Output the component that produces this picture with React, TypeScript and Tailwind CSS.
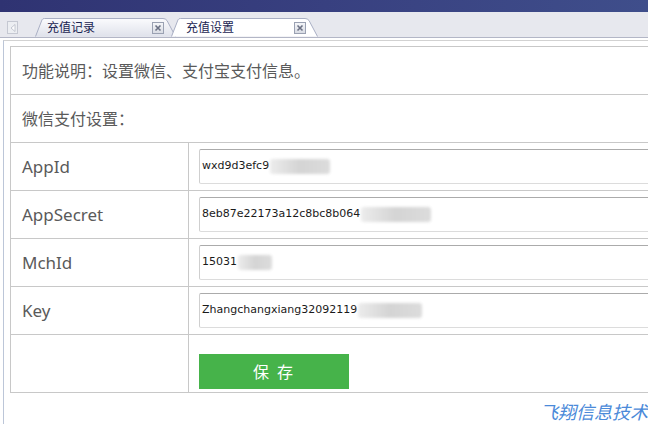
import React from "react";

const CJK = '"Noto Sans", "Noto Sans CJK SC", sans-serif';

const FIELDS = [
  { label: "AppId", value: "wxd9d3efc9", blur: "w-[60px]" },
  { label: "AppSecret", value: "8eb87e22173a12c8bc8b064", blur: "w-[70px]" },
  { label: "MchId", value: "15031", blur: "w-[34px]" },
  { label: "Key", value: "Zhangchangxiang32092119", blur: "w-[64px]" },
];

function CloseBox() {
  return (
    <span className="flex h-[12px] w-[12px] items-center justify-center border border-[#9aa1b2] bg-gradient-to-b from-[#f4f5f8] to-[#d9dce4]">
      <svg width="8" height="8" viewBox="0 0 8 8">
        <path d="M1.5 1.5 L6.5 6.5 M6.5 1.5 L1.5 6.5" stroke="#6b7184" strokeWidth="1.6" />
      </svg>
    </span>
  );
}

function Tab({ title, active, width, className }: { title: string; active?: boolean; width: number; className?: string }) {
  const w = width;
  const d = `M0.5 18.5 L7 1.8 Q7.6 0.5 9.5 0.5 L${w - 13} 0.5 Q${w - 10.5} 0.5 ${w - 9} 2.5 L${w - 0.5} 18.5`;
  return (
    <div className={`relative flex h-[19px] items-center ${className ?? ""}`} style={{ width: w }}>
      <svg className="absolute inset-0" width={w} height={19} viewBox={`0 0 ${w} 19`}>
        <defs>
          <linearGradient id={`g-${title}`} x1="0" y1="0" x2="0" y2="1">
            <stop offset="0" stopColor={active ? "#ffffff" : "#fbfbfd"} />
            <stop offset="1" stopColor={active ? "#ffffff" : "#dfe2eb"} />
          </linearGradient>
        </defs>
        <path d={d} fill={`url(#g-${title})`} stroke="#a9afc4" strokeWidth="1" />
      </svg>
      <span className={`relative text-[12px] leading-none text-[#1b2552] ${active ? "ml-[15px]" : "ml-[12px]"}`}>{title}</span>
      <span className="relative ml-auto mr-[12px]">
        <CloseBox />
      </span>
    </div>
  );
}

export default function App() {
  return (
    <div className="relative h-[424px] w-[648px] overflow-hidden bg-white" style={{ fontFamily: CJK }}>
      <div className="h-[12px] bg-gradient-to-r from-[#2f3372] via-[#384080] to-[#3f4e8b]" />

      <div className="flex h-[26px] items-end border-b border-[#b3b6c6] bg-[#e7e8ee] pl-[7px]">
        <span className="mb-[3px] flex h-[13px] w-[11px] items-center justify-center border border-[#c5c8d2] bg-[#eceef2]">
          <svg width="6" height="8" viewBox="0 0 6 8">
            <path d="M5 0.5 L1 4 L5 7.5 Z" fill="#fdfdfe" stroke="#b7bbc7" strokeWidth="0.8" />
          </svg>
        </span>
        <Tab title="充值记录" width={141} className="ml-[17px]" />
        <Tab title="充值设置" active width={147} className="-ml-[5px]" />
      </div>

      <div className="mt-[2px] ml-[3px] border-t border-l border-t-[#d2d2d2] border-l-[#bcc6d8] pl-[6px] pt-[5px] pb-[8px]">
        <table className="w-[720px] border-collapse text-[#5a5a5a]">
          <tbody>
            <tr className="h-[48px]">
              <td colSpan={2} className="border border-[#c8c8c8] pl-[11px] text-[16px]">
                功能说明：设置微信、支付宝支付信息。
              </td>
            </tr>
            <tr className="h-[48px]">
              <td colSpan={2} className="border border-[#c8c8c8] pl-[11px] text-[16px]">
                微信支付设置：
              </td>
            </tr>
            {FIELDS.map((f) => (
              <tr key={f.label} className="h-[48px]">
                <td className="w-[178px] border border-[#c8c8c8] pl-[11px] text-[17px]">{f.label}</td>
                <td className="border border-[#c8c8c8] pl-[10px]">
                  <div className="flex h-[35px] items-center rounded-[2px] border border-[#cfcfcf] border-t-[#ababab] border-b-[#dcdcdc] pl-[2px] text-[11px] text-[#1a1a1a]" style={{ fontFamily: '"DejaVu Sans", sans-serif' }}>
                    <span>{f.value}</span>
                    <span className={`ml-[1px] h-[15px] ${f.blur} rounded-[3px] bg-gradient-to-r from-[#ececec] via-[#d4d4d4] to-[#dcdcdc] blur-[1.5px]`} />
                  </div>
                </td>
              </tr>
            ))}
            <tr className="h-[58px]">
              <td className="border border-[#c8c8c8]" />
              <td className="border border-[#c8c8c8] pl-[10px] pt-[19px] pb-[2px] align-top">
                <button className="h-[35px] w-[150px] bg-[#46b34a] text-[16px] tracking-[2px] text-white">保 存</button>
              </td>
            </tr>
          </tbody>
        </table>

        <div className="ml-[530px] mt-[10px] whitespace-nowrap text-[18px] italic leading-none text-[#4b8ad9]">
          飞翔信息技术
        </div>
      </div>
    </div>
  );
}
